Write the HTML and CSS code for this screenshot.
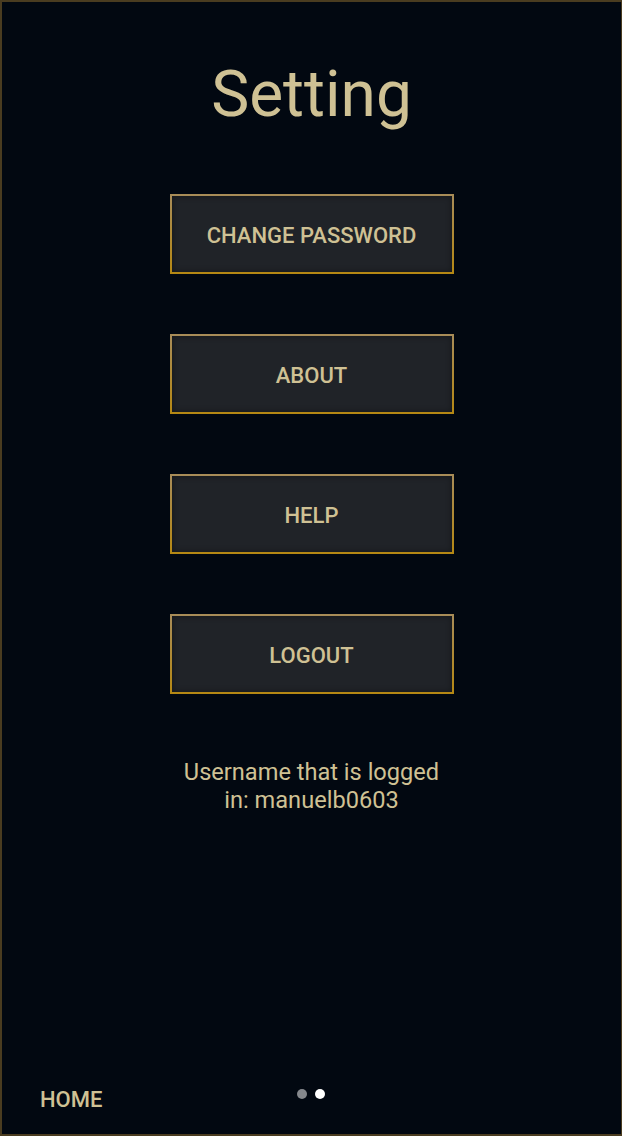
FILE: index.html
```html
<!DOCTYPE html>
<html>
<head>
<meta charset="utf-8">
<link rel="stylesheet" href="styles.css">
</head>
<body>
<div class="screen">
  <h1 class="title">Setting</h1>
  <div class="buttons">
    <button class="btn">CHANGE PASSWORD</button>
    <button class="btn">ABOUT</button>
    <button class="btn">HELP</button>
    <button class="btn">LOGOUT</button>
  </div>
  <p class="user">Username that is logged<br>in: manuelb0603</p>
  <div class="spacer"></div>
  <div class="footer">
    <span class="home">HOME</span>
    <div class="dots"><span class="dot"></span><span class="dot active"></span></div>
    <span></span>
  </div>
</div>
</body>
</html>
```
FILE: styles.css
```css
* { box-sizing: border-box; }
html, body { margin: 0; padding: 0; background: #020811; }
.screen {
  width: 622px;
  height: 1136px;
  border: 2px solid #4a3c20;
  border-right-width: 1px;
  background: #020811;
  display: flex;
  flex-direction: column;
  align-items: center;
  font-family: Roboto, "Liberation Sans", sans-serif;
  color: #cfc194;
}
.title {
  margin: 56px 0 0;
  font-size: 64px;
  line-height: 74px;
  font-weight: 400;
  color: #cfc194;
}
.buttons {
  margin-top: 62px;
  display: flex;
  flex-direction: column;
  gap: 60px;
}
.btn {
  width: 284px;
  height: 80px;
  background: #202328;
  border: 2px solid;
  border-image: linear-gradient(180deg, #a88c58, #b58814) 1;
  color: #cfc194;
  font-family: Roboto, "Liberation Sans", sans-serif;
  font-size: 22px;
  font-weight: 500;
  padding: 2px 0 0;
  box-shadow: inset 0 0 6px rgba(0,0,0,0.4);
}
.user {
  margin: 64px 0 0;
  text-align: center;
  font-size: 23.6px;
  line-height: 28px;
}
.spacer { flex: 1; }
.footer {
  width: 100%;
  display: grid;
  grid-template-columns: 1fr auto 1fr;
  align-items: center;
  padding: 0 0 21px 38px;
  height: 60px;
}
.home {
  font-size: 22px;
  font-weight: 500;
  margin-top: 12px;
}
.dots {
  display: flex;
  gap: 8px;
  margin-left: -34px;
}
.dot {
  width: 10px;
  height: 10px;
  border-radius: 50%;
  background: #85888d;
}
.dot.active { background: #ffffff; }
```
